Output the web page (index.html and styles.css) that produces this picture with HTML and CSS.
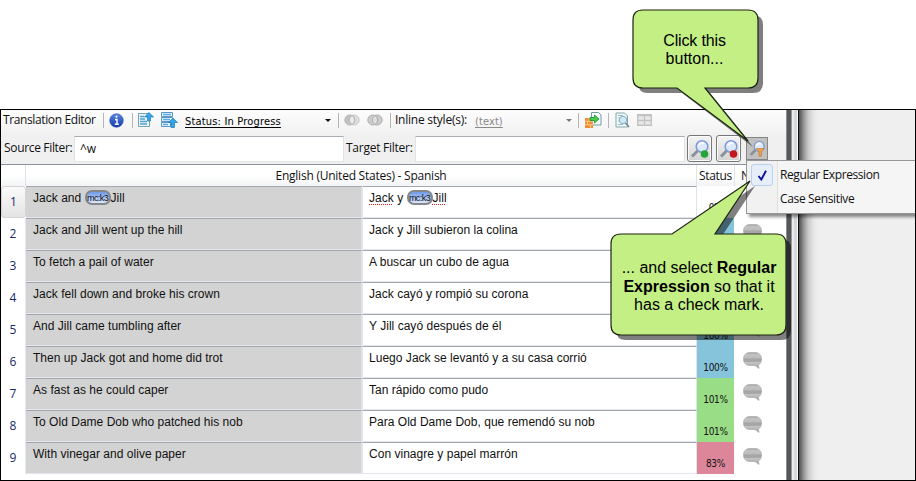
FILE: index.html
```html
<!DOCTYPE html>
<html lang="en">
<head>
<meta charset="utf-8">
<title>Translation Editor</title>
<link rel="stylesheet" href="styles.css">
</head>
<body>
<svg class="defs" width="0" height="0">
  <defs>
    <linearGradient id="gb" x1="0" y1="0" x2="0" y2="1"><stop offset="0" stop-color="#a2a2a2"/><stop offset=".15" stop-color="#c4c4c4"/><stop offset=".36" stop-color="#b8b8b8"/><stop offset=".4" stop-color="#a3a3a3"/><stop offset=".56" stop-color="#a8a8a8"/><stop offset=".62" stop-color="#c4c4c4"/><stop offset="1" stop-color="#a2a2a2"/></linearGradient>
    <linearGradient id="gi" x1="0" y1="0" x2="0" y2="1"><stop offset="0" stop-color="#5b86e4"/><stop offset="1" stop-color="#1238ae"/></linearGradient>
    <symbol id="bubble" viewBox="0 0 19 17"><path d="M7 .5H12C16 .5 18.500 3 18.500 7S16.500 12.500 15.500 12.800L16 16.500 12 13.500H7C3 13.500.5 11 .5 7S3 .5 7 .5z" fill="url(#gb)" stroke="#b0b0b0" stroke-width=".8"/></symbol>
    <symbol id="lens" viewBox="0 0 20 20"><path d="M2 17.500L8 11.500" stroke="#8b8f98" stroke-width="3"/><circle cx="12" cy="7.500" r="5.800" fill="#dbe9fb" stroke="#7d9bd8" stroke-width="1.500"/><path d="M9 6.500a3.500 3.500 0 0 1 5-2" fill="none" stroke="#fff" stroke-width="2"/></symbol>
  </defs>
</svg>
<div class="frame">
  <div class="editor">
    <div class="toolbar">
      <span class="ui title">Translation Editor</span>
      <i class="sep"></i>
      <svg class="i-info" width="15" height="15" viewBox="0 0 15 15"><circle cx="7.500" cy="7.500" r="6.800" fill="url(#gi)" stroke="#3150a8" stroke-width=".6"/><path d="M6 6.500h2v4.500M5.800 11.200h4" stroke="#fff" stroke-width="1.400" fill="none"/><circle cx="7.500" cy="3.700" r="1.100" fill="#fff"/></svg>
      <i class="sep"></i>
      <svg class="i-up" width="16" height="16" viewBox="0 0 16 16"><path d="M.5 1.500h11v13H.5z" fill="#edf6f8" stroke="#72a3ae"/><path d="M2 4.500h4M2 7h5M2 9.500h7M2 12h7" stroke="#4fa1d1" stroke-width="1.300"/><path d="M11 .5l4.500 4.500h-3v4H9.500V5H6.500z" fill="#31a6e8" stroke="#2479b5" stroke-width=".7"/></svg>
      <svg class="i-up2" width="17" height="16" viewBox="0 0 17 16"><path d="M.5.5h11v4H.5zM.5 5.500h11v4H.5zM.5 10.500h9v4H.5z" fill="#e5f3fb" stroke="#5b96c6"/><path d="M2 2.500h8M2 7.500h7M2 12.500h5" stroke="#58ace4" stroke-width="1.500"/><path d="M12 6l4.500 4.500h-3v5h-3.500v-5H7.500z" fill="#31a6e8" stroke="#2479b5" stroke-width=".7"/></svg>
      <span class="status">Status: In Progress</span>
      <i class="tri"></i>
      <i class="sep s3"></i>
      <svg class="i-c1" width="16" height="12" viewBox="0 0 16 12"><circle cx="10.200" cy="6" r="5" fill="#dedede" stroke="#c8c8c8"/><circle cx="5.800" cy="6" r="5" fill="#c2c2c2" stroke="#b5b5b5"/><path d="M8 1.600a5 5 0 0 1 0 8.800a5 5 0 0 1 0-8.800" fill="#ececec" stroke="#b5b5b5"/></svg>
      <svg class="i-c2" width="16" height="12" viewBox="0 0 16 12"><circle cx="10.200" cy="6" r="5" fill="#ccc" stroke="#b0b0b0"/><circle cx="5.800" cy="6" r="5" fill="#ccc" stroke="#b0b0b0"/><path d="M8 1.600a5 5 0 0 1 0 8.800a5 5 0 0 1 0-8.800" fill="#e0e0e0" stroke="#b0b0b0"/></svg>
      <i class="sep s4"></i>
      <span class="ui inline">Inline style(s):</span>
      <span class="textsel">(text)</span>
      <i class="tri dim"></i>
      <i class="sep s5"></i>
      <svg class="i-imp" width="17" height="17" viewBox="0 0 17 17"><path d="M6.500.5h7l2.500 2.500v10H6.500z" fill="#f5fafa" stroke="#729ba3"/><path d="M0 6h8v10H0z" fill="#f08d32"/><path d="M0 9.300h8M0 12.700h8M4 6v3.200M2.500 9.500v3M5.500 13v3" stroke="#ffe2b0" stroke-width=".7"/><path d="M5 5.500h4.500V3l4.500 4-4.500 4V8.500H5z" fill="#43cf4c" stroke="#158d2b" stroke-width=".8"/></svg>
      <i class="sep s6"></i>
      <svg class="i-prev" width="15" height="17" viewBox="0 0 15 17"><path d="M1 1h8.500l3 3v11H1z" fill="#f2f8f8" stroke="#86a7aa"/><path d="M3 3.500h5M3 6h2M3 9h2M3 12.500h5" stroke="#8fc1cb"/><circle cx="8" cy="8" r="3.700" fill="#d1e8f5" stroke="#8fadc3"/><path d="M10.500 11l3.500 4" stroke="#778b98" stroke-width="1.800"/></svg>
      <svg class="i-grid" width="15" height="12" viewBox="0 0 15 12"><path d="M.7.700h13.600v10.600H.7z" fill="#e8e8e8" stroke="#c2c2c2" stroke-width="1.400"/><path d="M0 1.500h15M0 6.500h15M7.500 0v12" stroke="#c2c2c2" stroke-width="1.300"/></svg>
    </div>
    <div class="filters">
      <span class="ui sf">Source Filter:</span><div class="field f1"><span class="ui">^w</span></div>
      <span class="ui tf">Target Filter:</span><div class="field f2"></div>
      <div class="btn b1"><svg width="20" height="20"><use href="#lens"/><circle cx="14.500" cy="15" r="3.800" fill="#25a43a"/></svg></div>
      <div class="btn b2"><svg width="20" height="20"><use href="#lens"/><circle cx="14.500" cy="15" r="3.800" fill="#c4161f"/></svg></div>
      <div class="btn b3"><svg width="17" height="17" viewBox="0 0 20 20"><use href="#lens"/><path d="M8.500 10h9.500l-3.400 4v5h-2.800v-5z" fill="#eda04d" stroke="#bd7428" stroke-width=".7"/></svg></div>
    </div>
    <div class="head"><span></span><span class="ui lang">English (United States) - Spanish</span><span class="ui st">Status</span><span class="ui nt">N</span></div>
    <div class="rows">
      <div class="row first"><b class="num">1</b><div class="src">Jack and <span class="tag">mc:k3</span>Jill</div><div class="tgt"><u>Jack</u> y <span class="tag">mc:k3</span><u>Jill</u></div><div class="pct none">0%</div><div class="note"></div></div>
      <div class="row"><b class="num">2</b><div class="src">Jack and Jill went up the hill</div><div class="tgt">Jack y Jill subieron la colina</div><div class="pct blue"></div><div class="note"><svg><use href="#bubble"/></svg></div></div>
      <div class="row"><b class="num">3</b><div class="src">To fetch a pail of water</div><div class="tgt">A buscar un cubo de agua</div><div class="pct blue"></div><div class="note"></div></div>
      <div class="row"><b class="num">4</b><div class="src">Jack fell down and broke his crown</div><div class="tgt">Jack cayó y rompió su corona</div><div class="pct blue"></div><div class="note"></div></div>
      <div class="row"><b class="num">5</b><div class="src">And Jill came tumbling after</div><div class="tgt">Y Jill cayó después de él</div><div class="pct blue">100%</div><div class="note"><svg><use href="#bubble"/></svg></div></div>
      <div class="row"><b class="num">6</b><div class="src">Then up Jack got and home did trot</div><div class="tgt">Luego Jack se levantó y a su casa corrió</div><div class="pct blue">100%</div><div class="note"><svg><use href="#bubble"/></svg></div></div>
      <div class="row"><b class="num">7</b><div class="src">As fast as he could caper</div><div class="tgt">Tan rápido como pudo</div><div class="pct green">101%</div><div class="note"><svg><use href="#bubble"/></svg></div></div>
      <div class="row"><b class="num">8</b><div class="src">To Old Dame Dob who patched his nob</div><div class="tgt">Para Old Dame Dob, que remendó su nob</div><div class="pct green">101%</div><div class="note"><svg><use href="#bubble"/></svg></div></div>
      <div class="row"><b class="num">9</b><div class="src">With vinegar and olive paper</div><div class="tgt">Con vinagre y papel marrón</div><div class="pct pink">83%</div><div class="note"><svg><use href="#bubble"/></svg></div></div>
    </div>
  </div>
  <div class="edge"></div>
  <div class="desk"></div>
</div>
<div class="menu">
  <div class="item"><span class="check"><svg width="11" height="11" viewBox="0 0 11 11"><path d="M1.500 6l2.800 3.500L9 .8" fill="none" stroke="#10109a" stroke-width="1.900"/></svg></span><span class="ui re">Regular Expression</span></div>
  <div class="item"><span class="check off"></span><span class="ui cs">Case Sensitive</span></div>
</div>
<svg class="callouts" width="916" height="481" viewBox="0 0 916 481">
  <g fill="#000" fill-opacity=".5">
    <path d="M643 10H748Q758 10 758 20V78Q758 88 748 88H705L748 142L677 88H643Q633 88 633 78V20Q633 10 643 10Z" transform="translate(5 5)"/>
    <path d="M621 234H672L750 181L715 234H776Q786 234 786 244V325Q786 335 776 335H621Q611 335 611 325V244Q611 234 621 234Z" transform="translate(5 5)"/>
  </g>
  <g fill="#c3ef85" stroke="#1c2413" stroke-width="1.200">
    <path d="M643 10H748Q758 10 758 20V78Q758 88 748 88H705L748 141L677 88H643Q633 88 633 78V20Q633 10 643 10Z"/>
    <path d="M621 234H672L750 181L715 234H776Q786 234 786 244V325Q786 335 776 335H621Q611 335 611 325V244Q611 234 621 234Z"/>
  </g>
</svg>
<div class="say say1"><span class="l1">Click this</span><br><span class="l2">button...</span></div>
<div class="say say2"><span class="m1">... and select <b>Regular</b></span><br><span class="m2"><b>Expression</b> so that it</span><br><span class="m3">has a check mark.</span></div>
</body>
</html>
```
FILE: styles.css
```css
* { box-sizing: border-box; }
body { margin: 0; width: 916px; height: 481px; overflow: hidden; background: #fff; font-family: "Liberation Sans", sans-serif; font-size: 12px; color: #111; position: relative; padding-top: 109px; }
.defs { position: absolute; }
svg { display: block; flex: none; }
.ui { font-family: "Open Sans", "Noto Sans", sans-serif; font-size: 12px; white-space: nowrap; color: #111; }
.frame { height: 372px; border: 1px solid #000; display: flex; }
.editor { width: 785px; flex: none; background: #fff; display: flex; flex-direction: column; }
.edge { width: 13px; flex: none; background: linear-gradient(90deg, #8c8e90 0 1px, #54585b 1px 5px, #96999c 5px 6px, #e9ebed 6px 8px, #d5d7da 8px 11px, #f7f7f7 11px 12px, #111 12px); }
.desk { flex: 1; background: linear-gradient(90deg, #4c4c4c, #8c8c8c 4px, #c8c8c8 9px, #e8e8e8 15px, #efefef 20px); }
.toolbar { height: 25px; display: flex; align-items: flex-start; background: linear-gradient(#fdfdfd, #f1f1f2); }
.toolbar > * { flex: none; }
.title { width: 99px; padding-left: 2px; margin-top: 2px; line-height: 16px; letter-spacing: -.38px; }
.sep { width: 1px; height: 15px; margin-top: 3px; background: #b5b5b5; margin-left: 3px; }
.i-info { margin: 3px 0 0 5px; }
.i-info + .sep { margin-left: 8px; }
.i-up { margin: 2px 0 0 5px; }
.i-up2 { margin: 2px 0 0 7px; }
.status { width: 140px; margin: 4px 0 0 7px; font: 11px/15px "DejaVu Sans Condensed", sans-serif; text-decoration: underline; text-underline-offset: 2px; letter-spacing: .18px; color: #000; }
.tri { width: 0; height: 0; margin-top: 9px; border: 3px solid transparent; border-top: 3px solid #111; border-bottom: 0; }
.s3 { margin-left: 7px; }
.i-c1 { margin: 4px 0 0 5px; }
.i-c2 { margin: 4px 0 0 7px; }
.s4 { margin-left: 7px; }
.inline { width: 80px; margin: 2px 0 0 4px; line-height: 16px; letter-spacing: -.24px; }
.textsel { width: 91px; font: 11px/15px "DejaVu Sans Condensed", sans-serif; margin-top: 4px; text-decoration: underline; text-underline-offset: 2px; color: #898989; letter-spacing: .1px; }
.tri.dim { border-top-color: #777; }
.s5 { margin-left: 6px; }
.i-imp { margin: 2px 0 0 6px; }
.s6 { margin-left: 6px; }
.i-prev { margin: 2px 0 0 6px; }
.i-grid { margin: 4px 0 0 7px; }
.filters { height: 30px; display: flex; background: #f0f0f1; border-bottom: 1px solid #8b929b; }
.filters > * { flex: none; }
.sf { width: 73px; padding: 5px 0 0 3px; line-height: 16px; letter-spacing: -.33px; }
.field { height: 26px; margin-top: 1px; background: #fff; border: 1px solid #e2e3ea; border-top-color: #abadb3; padding: 4px 0 0 5px; line-height: 16px; }
.f1 { width: 270px; }
.f2 { width: 270px; }
.tf { width: 71px; padding: 5px 0 0 2px; line-height: 16px; letter-spacing: -.25px; }
.btn { width: 25px; height: 27px; margin-left: 2px; border: 1px solid #777; border-radius: 3px; background: linear-gradient(#f4f4f4, #d3d3d3); box-shadow: inset 0 0 0 1px #fbfbfb; display: flex; align-items: center; justify-content: center; }
.b2 { margin-left: 4px; }
.b3 { width: 22px; height: 23px; margin: 2px 0 0 5px; border-radius: 0; background: #c1c1c1; border-color: #858585; box-shadow: none; }
.head { height: 21px; display: flex; background: linear-gradient(#fff 50%, #f3f4f6); }
.head span { line-height: 21px; text-align: center; border-right: 1px solid #dfe2e7; flex: none; }
.head span:first-child { width: 25px; }
.head .lang { width: 671px; letter-spacing: -.24px; }
.head .st { width: 38px; letter-spacing: -.35px; }
.head .nt { flex: 1; text-align: left; padding-left: 6px; }
.row { height: 32px; display: flex; }
.num { width: 25px; flex: none; font: 12px/32px "Open Sans", sans-serif; color: #18286a; text-align: center; border-right: 1px solid #e3e6ee; }
.first .num { background: linear-gradient(#fafafa, #e4e4e4); border: 1px solid #d5d5d5; border-radius: 3px; line-height: 30px; }
.src, .tgt { border-top: 1px solid #a6a8b0; border-bottom: 1px solid #e3e6ee; border-right: 2px solid #e1e4ea; padding-left: 7px; line-height: 23px; flex: none; white-space: pre; letter-spacing: .025px; }
.src { width: 337px; background: #d3d3d3; }
.tgt { width: 334px; padding-left: 6px; border-right-width: 1px; }
.tgt u { text-decoration: underline dotted #e02020 1px; text-underline-offset: 2px; }
.tag { display: inline-flex; justify-content: center; width: 26px; height: 15px; vertical-align: top; margin-top: 3px; border: 2px solid #85878b; border-radius: 7px; background: linear-gradient(#6f9bea, #dbe7fc); font-size: 9px; line-height: 12px; letter-spacing: -.55px; }
.pct { width: 37px; flex: none; font: 10px/12px "DejaVu Sans Condensed", sans-serif; letter-spacing: -.3px; text-align: center; padding-top: 16px; }
.blue { background: #86c4dc; }
.green { background: #99dd86; }
.pink { background: #dd8699; }
.note { padding: 6px 0 0 9px; }
.note svg { width: 19px; height: 17px; }
.menu { position: absolute; left: 746px; top: 160px; width: 169px; height: 54px; background: linear-gradient(90deg, #f1f1f1 0 30px, #e0e0e0 30px 31px, #f5f5f5 31px); border: 1px solid #979797; border-right: 0; box-shadow: 3px 3px 3px rgba(0,0,0,.45); padding: 2px 0 0 4px; clip-path: inset(0 0 -6px 0); }
.item { height: 24px; display: flex; align-items: center; }
.check { width: 22px; height: 22px; border: 1px solid #b9cfee; border-radius: 3px; background: #e5eef9; display: flex; align-items: center; justify-content: center; }
.off { visibility: hidden; }
.re, .cs { margin-left: 7px; letter-spacing: -.4px; line-height: 16px; }
.cs { letter-spacing: -.35px; }
.callouts { position: absolute; left: 0; top: 0; }
.say { position: absolute; text-align: center; color: #000; font-size: 16px; line-height: 18px; white-space: nowrap; }
.say1 { left: 632px; top: 32px; width: 125px; }
.l1 { letter-spacing: -.15px; }
.say2 { left: 611px; top: 259px; width: 176px; line-height: 18.500px; }
```
